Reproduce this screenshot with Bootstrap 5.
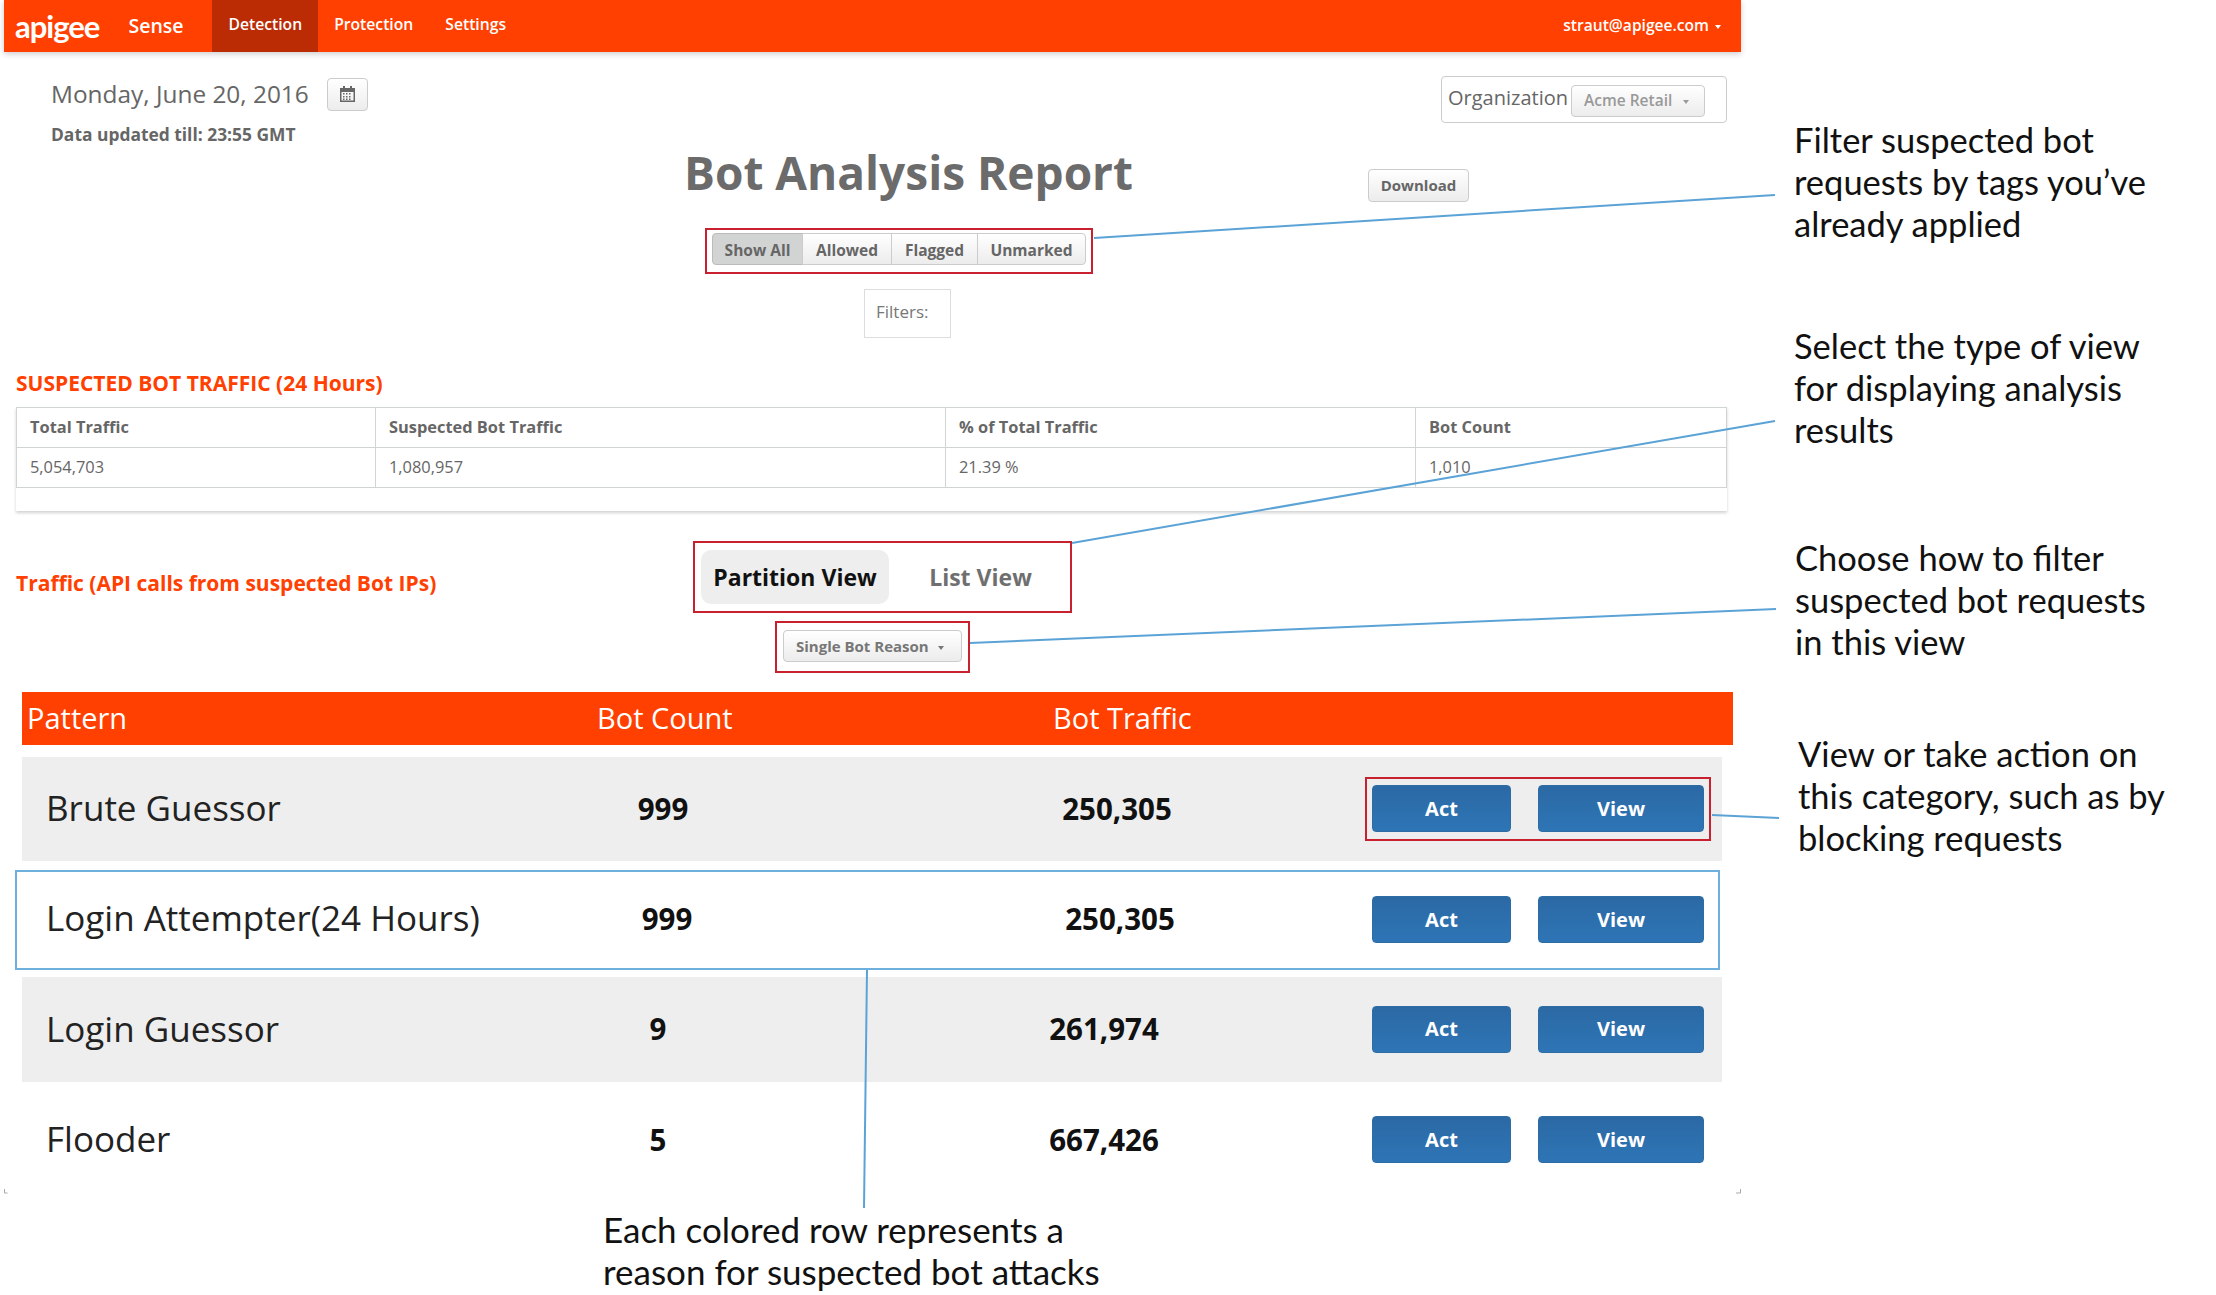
<!DOCTYPE html>
<html lang="en">
<head>
  <meta charset="UTF-8" />
  <title>Bot Analysis Report</title>
  <link href="https://cdn.jsdelivr.net/npm/bootstrap@5.3.3/dist/css/bootstrap.min.css" rel="stylesheet"/>
  <style>
    body {
      font-family: "Open Sans", sans-serif;
      background: #fff;
      color: #666;
      position: relative;
      width: 2216px;
      height: 1295px;
      overflow: hidden;
    }
    .app-frame { width: 1737px; margin-left: 4px; }

    .top-bar { height: 52px; padding: 0; background: #ff4000; box-shadow: 0 2px 6px rgba(0,0,0,.2); --bs-navbar-nav-link-padding-x: 16px; }
    .logo-text { font-family: "Lato", sans-serif; font-size: 31px; font-weight: 700; letter-spacing: -1px; color: #fff; margin-left: 11px; line-height: 50px; }
    .app-name { font-size: 19.5px; font-weight: 600; color: #fff; margin-left: 29px; width: 84px; }
    .top-bar .navbar-nav .nav-link { color: #fff; font-size: 15.7px; font-weight: 600; height: 52px; line-height: 48px; padding-top: 0; padding-bottom: 0; }
    .top-bar .navbar-nav .nav-link.active-tab { background: #bb2c05; }
    .top-bar .user-menu { font-size: 15.6px; font-weight: 600; color: #fff; padding-right: 20px; }
    .caret-down { display: inline-block; border-top: 4px solid currentColor; border-left: 3.5px solid transparent; border-right: 3.5px solid transparent; vertical-align: middle; margin-left: 6px; }

    .head-row { height: 94px; padding: 24px 14px 0 47px; }
    .date-text { font-size: 24.4px; line-height: 36px; }
    .cal-btn { width: 41px; height: 33px; padding: 0; margin-left: 18px; background: linear-gradient(#fff, #ececec); border: 1px solid #ccc; border-radius: 4px; display: flex; align-items: center; justify-content: center; }
    .updated-text { font-size: 17.4px; font-weight: 700; margin-top: 10px; line-height: 24px; }
    .org-box { width: 286px; height: 47px; border: 1px solid #ccc; border-radius: 4px; padding: 8px 10px 0 6px; font-size: 20px; line-height: 26px; }
    .grey-btn { background: linear-gradient(#fff, #ececec); border: 1px solid #ccc; color: #777; font-weight: 700; border-radius: 4px; }
    .grey-btn:hover { color: #777; border-color: #ccc; }
    .org-select { width: 134px; height: 32px; padding: 0 0 0 12px; font-size: 15.5px; margin-left: 3px; font-weight: 600; color: #999; text-align: left; white-space: nowrap; }
    .org-select .caret-down { margin-left: 11px; }

    .title-row { height: 60px; padding-left: 680px; }
    .page-title { font-size: 46px; font-weight: 700; color: #6b6b6b; margin: 0; line-height: 52px; white-space: nowrap; }
    .download-btn { width: 101px; height: 33px; padding: 0; font-size: 15px; margin-left: 235px; margin-top: 23px; color: #666; }

    .filter-wrap { margin: 22px 0 0 701px; width: 388px; height: 46px; border: 2px solid #c8202f; padding: 3px 5px; }
    .filter-wrap .btn { height: 32px; padding: 1px 0 0; font-size: 15.5px; line-height: 30px; color: #666; }
    .filter-wrap .btn-a { width: 91px; background: #d2d4d4; border-color: #bbb; }
    .filter-wrap .btn-b { width: 90px; }
    .filter-wrap .btn-c { width: 87px; }
    .filter-wrap .btn-d { width: 109px; }
    .filters-box { margin: 15px 0 0 860px; width: 87px; height: 49px; border: 1px solid #ddd; font-size: 17px; line-height: 44px; padding-left: 11px; color: #777; }

    .sec-title { color: #ff4000; font-size: 21px; font-weight: 700; margin: 0; line-height: 28px; }
    .sec-title.first-title { margin: 31px 0 0 12px; }

    .stats-card { margin: 10px 0 0 12px; width: 1711px; height: 104px; box-shadow: 0 2px 3px rgba(0,0,0,.18); }
    .stats-card .table { margin: 0; table-layout: fixed; font-size: 16.4px; --bs-table-color: #666; border-color: #d0d4d4; }
    .stats-card th, .stats-card td { height: 40px; padding: 0 0 0 13px; vertical-align: middle; color: #666; }

    .view-row { margin: 30px 0 0 12px; height: 72px; }
    .view-row .sec-title { width: 677px; padding-top: 12px; }
    .view-box { width: 379px; height: 72px; border: 2px solid #c8202f; padding: 7px 6px; display: flex; align-items: center; }
    .pill-tab { font-size: 23px; font-weight: 700; border-radius: 10px; height: 54px; line-height: 54px; padding: 0; text-align: center; color: #6f6f6f; white-space: nowrap; }
    .pill-tab.on-tab { background: #eee; color: #111; width: 188px; }
    .pill-tab.off-tab { width: 103px; margin-left: 40px; }

    .reason-box { margin: 8px 0 0 771px; width: 195px; height: 52px; border: 2px solid #c8202f; padding: 7px 6px; }
    .reason-btn { width: 179px; height: 32px; padding: 0 0 0 12px; font-size: 15px; color: #777; text-align: left; white-space: nowrap; }
    .reason-btn .caret-down { margin-left: 9px; }

    .pat-head { margin: 19px 0 0 18px; width: 1711px; height: 53px; background: #ff4000; color: #fff; font-size: 29px; line-height: 52px; display: grid; grid-template-columns: 570px 456px 1fr; padding-left: 5px; }

    .pat-row { display: grid; align-items: center; margin-left: 18px; width: 1700px; font-size: 35px; color: #222; }
    .pat-row .num-col { font-weight: 700; font-size: 29.5px; text-align: center; color: #111; }
    .pat-name { padding-left: 24px; white-space: nowrap; margin-top: -1px; }
    .row-one { margin-top: 12px; height: 104px; background: #eee; grid-template-columns: 500px 282px 213px 200px 1fr; }
    .row-two { margin: 9px 0 0 11px; width: 1705px; height: 100px; border: 2px solid #6db0de; grid-template-columns: 509px 282px 212px 200px 1fr; }
    .row-two .pat-name { padding-left: 29px; margin-top: -4px; }
    .row-two .num-col { margin-top: -2px; }
    .row-three { margin-top: 7px; height: 105px; background: #eee; grid-template-columns: 495px 282px 205px 200px 1fr; }
    .row-four { margin-top: 6px; height: 104px; grid-template-columns: 495px 282px 205px 200px 1fr; }

    .act-wrap { justify-self: end; width: 346px; height: 64px; margin-right: 11px; border: 2px solid transparent; padding: 6px 5px; display: flex; justify-content: space-between; }
    .act-wrap.marked { border-color: #c8202f; }
    .row-two .act-wrap { margin-right: 7px; }
    .act-btn { height: 47px; padding: 0; font-size: 20px; font-weight: 700; color: #fff; background: linear-gradient(#2b69a4, #2e75b6); border: 1px solid #2e6da4; border-radius: 4px; }
    .act-btn:hover { color: #fff; }
    .act-btn.short-btn { width: 139px; }
    .act-btn.long-btn { width: 166px; }

    .note-text { position: absolute; font-family: "Lato", sans-serif; font-size: 35px; line-height: 42px; color: #111; white-space: nowrap; }
    .note-one { left: 1794px; top: 119px; }
    .note-two { left: 1794px; top: 325px; }
    .note-three { left: 1795px; top: 537px; }
    .note-four { left: 1798px; top: 733px; }
    .note-five { left: 603px; top: 1208px; }
    .note-four, .note-one, .note-two, .note-three { font-size: 34.5px; }
    .lead-lines { position: absolute; left: 0; top: 0; pointer-events: none; }
  </style>
</head>
<body>
  <div class="app-frame">
    <nav class="navbar navbar-expand top-bar">
      <div class="d-flex align-items-center w-100">
        <span class="logo-text">apigee</span>
        <span class="app-name">Sense</span>
        <ul class="navbar-nav">
          <li class="nav-item"><a class="nav-link active-tab" href="#">Detection</a></li>
          <li class="nav-item"><a class="nav-link" href="#">Protection</a></li>
          <li class="nav-item"><a class="nav-link" href="#">Settings</a></li>
        </ul>
        <span class="user-menu ms-auto">straut@apigee.com<span class="caret-down"></span></span>
      </div>
    </nav>

    <div class="head-row d-flex justify-content-between align-items-start">
      <div>
        <div class="d-flex align-items-center">
          <span class="date-text">Monday, June 20, 2016</span>
          <button class="cal-btn" type="button" aria-label="Pick date">
            <svg width="15" height="16" viewBox="0 0 15 16"><path fill="#666" d="M3 0h2v2h5V0h2v2h3v14H0V2h3zM1.500 6v8.500h12V6z"/><path fill="#666" d="M3 7h1.500v1.500H3zM6 7h1.500v1.500H6zM9 7h1.500v1.500H9zM3 10h1.500v1.500H3zM6 10h1.500v1.500H6zM9 10h1.500v1.500H9zM3 12.500h1.500V14H3zM6 12.500h1.500V14H6zM9 12.500h1.500V14H9z"/></svg>
          </button>
        </div>
        <div class="updated-text">Data updated till: 23:55 GMT</div>
      </div>
      <div class="org-box d-flex align-items-start">
        <span>Organization</span>
        <button class="btn grey-btn org-select" type="button">Acme Retail<span class="caret-down"></span></button>
      </div>
    </div>

    <div class="title-row d-flex">
      <h1 class="page-title">Bot Analysis Report</h1>
      <button class="btn grey-btn download-btn" type="button">Download</button>
    </div>

    <div class="filter-wrap">
      <div class="btn-group" role="group">
        <button class="btn grey-btn btn-a" type="button">Show All</button>
        <button class="btn grey-btn btn-b" type="button">Allowed</button>
        <button class="btn grey-btn btn-c" type="button">Flagged</button>
        <button class="btn grey-btn btn-d" type="button">Unmarked</button>
      </div>
    </div>
    <div class="filters-box">Filters:</div>

    <h2 class="sec-title first-title">SUSPECTED BOT TRAFFIC (24 Hours)</h2>
    <div class="stats-card">
      <table class="table table-bordered">
        <colgroup><col style="width:359px"><col style="width:570px"><col style="width:470px"><col></colgroup>
        <thead><tr><th>Total Traffic</th><th>Suspected Bot Traffic</th><th>% of Total Traffic</th><th>Bot Count</th></tr></thead>
        <tbody><tr><td>5,054,703</td><td>1,080,957</td><td>21.39 %</td><td>1,010</td></tr></tbody>
      </table>
    </div>

    <div class="view-row d-flex align-items-center">
      <h2 class="sec-title">Traffic (API calls from suspected Bot IPs)</h2>
      <div class="view-box">
        <div class="pill-tab on-tab">Partition View</div>
        <div class="pill-tab off-tab">List View</div>
      </div>
    </div>

    <div class="reason-box">
      <button class="btn grey-btn reason-btn" type="button">Single Bot Reason<span class="caret-down"></span></button>
    </div>

    <div class="pat-head"><span>Pattern</span><span>Bot Count</span><span>Bot Traffic</span></div>

    <div class="pat-row row-one">
      <div class="pat-name">Brute Guessor</div><div class="num-col">999</div><div></div><div class="num-col">250,305</div>
      <div class="act-wrap marked"><button class="btn act-btn short-btn" type="button">Act</button><button class="btn act-btn long-btn" type="button">View</button></div>
    </div>
    <div class="pat-row row-two">
      <div class="pat-name">Login Attempter(24 Hours)</div><div class="num-col">999</div><div></div><div class="num-col">250,305</div>
      <div class="act-wrap"><button class="btn act-btn short-btn" type="button">Act</button><button class="btn act-btn long-btn" type="button">View</button></div>
    </div>
    <div class="pat-row row-three">
      <div class="pat-name">Login Guessor</div><div class="num-col">9</div><div></div><div class="num-col">261,974</div>
      <div class="act-wrap"><button class="btn act-btn short-btn" type="button">Act</button><button class="btn act-btn long-btn" type="button">View</button></div>
    </div>
    <div class="pat-row row-four">
      <div class="pat-name">Flooder</div><div class="num-col">5</div><div></div><div class="num-col">667,426</div>
      <div class="act-wrap"><button class="btn act-btn short-btn" type="button">Act</button><button class="btn act-btn long-btn" type="button">View</button></div>
    </div>
  </div>

  <svg class="lead-lines" width="2216" height="1295" fill="none" stroke="#5ba3d6" stroke-width="2">
    <path d="M1094 238L1775 195"/>
    <path d="M1072 543L1775 421"/>
    <path d="M970 643L1776 609"/>
    <path d="M1712 815L1779 818"/>
    <path d="M867 970L864 1208"/>
    <path stroke="#aaa" stroke-width="1" d="M4.500 1189v4h3M1736 1193h4.500v-4"/>
  </svg>

  <div class="note-text note-one">Filter suspected bot<br>requests by tags you’ve<br>already applied</div>
  <div class="note-text note-two">Select the type of view<br>for displaying analysis<br>results</div>
  <div class="note-text note-three">Choose how to filter<br>suspected bot requests<br>in this view</div>
  <div class="note-text note-four">View or take action on<br>this category, such as by<br>blocking requests</div>
  <div class="note-text note-five">Each colored row represents a<br>reason for suspected bot attacks</div>

  <script src="https://cdn.jsdelivr.net/npm/bootstrap@5.3.3/dist/js/bootstrap.bundle.min.js"></script>
</body>
</html>
